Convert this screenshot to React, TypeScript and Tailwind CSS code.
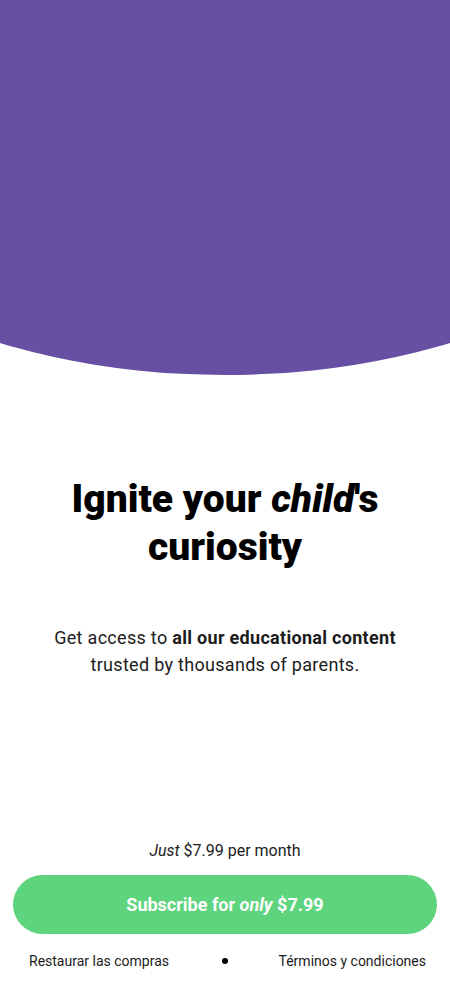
import React from 'react';

export default function App() {
  return (
    <div className="w-[450px] h-[1000px] bg-white flex flex-col overflow-hidden font-['Roboto',sans-serif] text-black">
      {/* curved header */}
      <div className="h-[375px] overflow-hidden shrink-0">
        <div className="w-[900px] -ml-[225px] h-full bg-[#6750a4] rounded-bl-[450px_239px] rounded-br-[450px_239px]" />
      </div>

      <h1 className="mt-[100px] text-center text-[39px] leading-[48px] font-black">
        Ignite your <em className="italic">child</em>'s
        <br />
        curiosity
      </h1>

      <p className="mt-[53px] text-center text-[18px] leading-[27px] tracking-[0.3px] text-[#1c1c1c]">
        Get access to <strong className="font-bold">all our educational content</strong>
        <br />
        trusted by thousands of parents.
      </p>

      <div className="mt-auto flex flex-col items-center">
        <p className="text-[16px] leading-5 text-[#1c1c1c]">
          <em className="italic">Just</em> $7.99 per month
        </p>
        <button className="mt-[14px] w-[424px] h-[59px] rounded-full bg-[#5ed47e] text-white text-[18px] font-bold">
          Subscribe for <em className="italic">only</em> $7.99
        </button>
        <div className="mt-[17px] mb-[29px] w-full pl-[29px] pr-[24px] grid grid-cols-[1fr_auto_1fr] items-center text-[14px] leading-5 text-[#1c1c1c]">
          <span className="justify-self-start">Restaurar las compras</span>
          <span className="w-[6px] h-[6px] mr-[6px] rounded-full bg-black" />
          <span className="justify-self-end">Términos y condiciones</span>
        </div>
      </div>
    </div>
  );
}
